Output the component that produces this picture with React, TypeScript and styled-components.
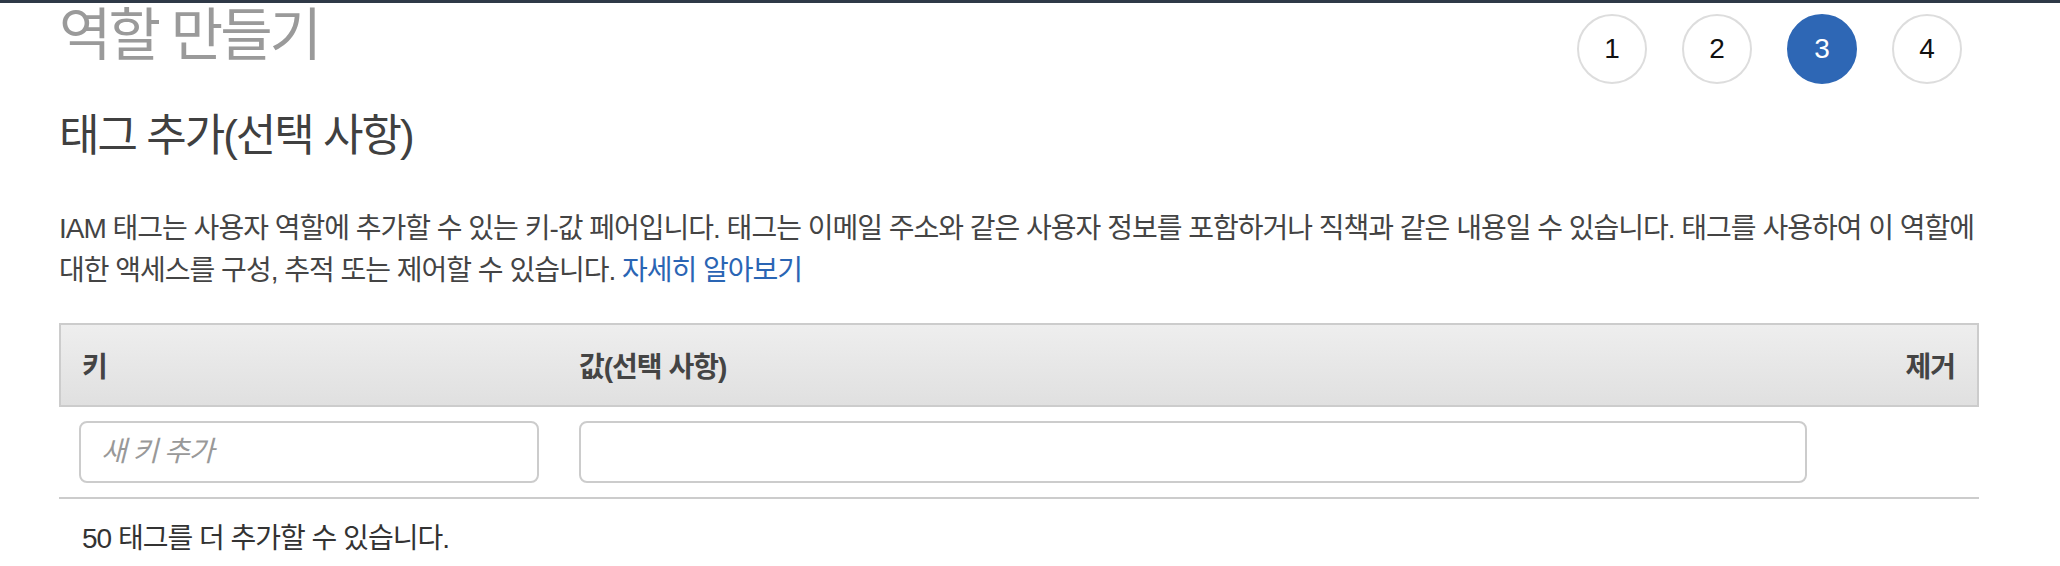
import React from "react";
import styled, { createGlobalStyle } from "styled-components";

const GlobalStyle = createGlobalStyle`
  html, body {
    margin: 0;
    padding: 0;
    background: #ffffff;
  }
  body {
    font-family: "Liberation Sans", "Noto Sans CJK KR", sans-serif;
    color: #444444;
    overflow: hidden;
  }
  * { box-sizing: border-box; }
`;

const Page = styled.div`
  width: 2060px;
  min-height: 566px;
  background: #fff;
`;

const TopBar = styled.div`
  height: 3px;
  background: #2f3947;
`;

const Content = styled.div`
  padding: 0 81px 0 59px;
  display: flex;
  flex-direction: column;
`;

const HeaderRow = styled.div`
  display: flex;
  justify-content: space-between;
  align-items: flex-start;
`;

const Title = styled.h1`
  margin: 0;
  font-size: 57px;
  line-height: 64px;
  font-weight: 400;
  letter-spacing: -3px;
  color: #9a9a9a;
  white-space: nowrap;
`;

const Steps = styled.ol`
  list-style: none;
  margin: 11px 17px 0 0;
  padding: 0;
  display: flex;
  gap: 35px;
`;

const Step = styled.li<{ $active?: boolean }>`
  width: 70px;
  height: 70px;
  border-radius: 50%;
  display: flex;
  align-items: center;
  justify-content: center;
  font-family: "Liberation Sans", Arial, sans-serif;
  font-size: 28px;
  color: ${(p) => (p.$active ? "#ffffff" : "#111111")};
  background: ${(p) => (p.$active ? "#2e67b5" : "#ffffff")};
  border: 2px solid ${(p) => (p.$active ? "#2e67b5" : "#dddddd")};
`;

const Heading = styled.h2`
  margin: 26px 0 0;
  font-size: 44px;
  line-height: 52px;
  font-weight: 400;
  letter-spacing: -2px;
  color: #404040;
  white-space: nowrap;
`;

const Description = styled.p`
  margin: 46px 0 0;
  font-size: 28px;
  line-height: 42px;
  letter-spacing: -1px;
  color: #444444;
  white-space: nowrap;
`;

const Link = styled.a`
  color: #2a65b4;
  text-decoration: none;
`;

const Table = styled.div`
  margin-top: 31px;
  display: grid;
  grid-template-columns: 500px 1fr 152px;
`;

const HeadCell = styled.div<{ $align?: "left" | "right"; $first?: boolean; $last?: boolean }>`
  height: 84px;
  display: flex;
  align-items: center;
  justify-content: ${(p) => (p.$align === "right" ? "flex-end" : "flex-start")};
  padding: 0 ${(p) => (p.$last ? "22px" : "20px")} 0 ${(p) => (p.$first ? "21px" : "20px")};
  background: linear-gradient(#eeeeee, #e0e0e0);
  border-top: 2px solid #cccccc;
  border-bottom: 2px solid #cccccc;
  border-left: ${(p) => (p.$first ? "2px solid #cccccc" : "none")};
  border-right: ${(p) => (p.$last ? "2px solid #cccccc" : "none")};
  font-size: 28px;
  font-weight: 700;
  letter-spacing: -1px;
  color: #444444;
  white-space: nowrap;
`;

const BodyCell = styled.div`
  padding: 14px 20px;
  border-bottom: 2px solid #cccccc;
  display: flex;
  align-items: center;
`;

const TextInput = styled.input`
  width: 100%;
  height: 62px;
  border: 2px solid #cccccc;
  border-radius: 8px;
  padding: 0 20px;
  font-family: "Liberation Sans", "Noto Sans CJK KR", sans-serif;
  font-size: 28px;
  letter-spacing: -1px;
  color: #444;
  background: #fff;
  outline: none;
  &::placeholder {
    color: #999999;
    font-style: italic;
  }
`;

const Footer = styled.p`
  margin: 19px 0 0 23px;
  font-size: 28px;
  line-height: 42px;
  letter-spacing: -1px;
  color: #333333;
  white-space: nowrap;
`;

export default function App() {
  return (
    <Page>
      <GlobalStyle />
      <TopBar />
      <Content>
        <HeaderRow>
          <Title>역할 만들기</Title>
          <Steps>
            <Step>1</Step>
            <Step>2</Step>
            <Step $active>3</Step>
            <Step>4</Step>
          </Steps>
        </HeaderRow>
        <Heading>태그 추가(선택 사항)</Heading>
        <Description>
          IAM 태그는 사용자 역할에 추가할 수 있는 키-값 페어입니다. 태그는 이메일 주소와 같은 사용자 정보를 포함하거나 직책과 같은 내용일 수 있습니다. 태그를 사용하여 이 역할에
          <br />
          대한 액세스를 구성, 추적 또는 제어할 수 있습니다. <Link href="#">자세히 알아보기</Link>
        </Description>
        <Table>
          <HeadCell $first>키</HeadCell>
          <HeadCell>값(선택 사항)</HeadCell>
          <HeadCell $last $align="right">제거</HeadCell>
          <BodyCell>
            <TextInput placeholder="새 키 추가" />
          </BodyCell>
          <BodyCell>
            <TextInput />
          </BodyCell>
          <BodyCell />
        </Table>
        <Footer>50 태그를 더 추가할 수 있습니다.</Footer>
      </Content>
    </Page>
  );
}
